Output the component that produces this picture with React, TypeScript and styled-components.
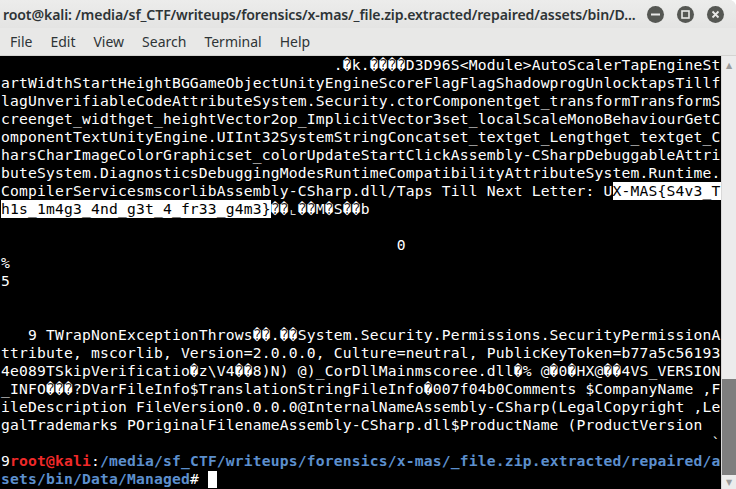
import * as React from "react";
import styled, { createGlobalStyle } from "styled-components";

const Global = createGlobalStyle`
  html, body {
    margin: 0;
    padding: 0;
    background: #ffffff;
  }
`;

const Window = styled.div`
  display: flex;
  flex-direction: column;
  width: 736px;
  height: 489px;
  overflow: hidden;
  border-top-right-radius: 7px;
  background: #e8e8e7;
`;

const TitleBar = styled.header`
  display: flex;
  align-items: center;
  height: 28px;
  padding: 0 0 0 3px;
  background: linear-gradient(#ececeb, #e4e4e3);
  font-family: "Noto Sans", sans-serif;
`;

const Title = styled.div`
  flex: 1;
  font-size: 14.1px;
  font-weight: 600;
  color: #2e3436;
  white-space: nowrap;
  letter-spacing: -0.12px;
`;

const Buttons = styled.div`
  display: flex;
  gap: 13px;
  padding-right: 12px;
`;

const WinButton = styled.div`
  width: 17px;
  height: 17px;
  border-radius: 50%;
  background: #555753;
  display: grid;
  place-items: center;
`;

const MenuBar = styled.nav`
  display: flex;
  align-items: center;
  height: 27px;
  padding-left: 1px;
  background: #e8e8e7;
  border-bottom: 1px solid #d4d4d2;
  font-family: "Noto Sans", sans-serif;
  font-size: 14px;
  color: #2e3436;
`;

const MenuItem = styled.span`
  padding: 0 9px;
`;

const Term = styled.div`
  flex: 1;
  display: flex;
  background: #000000;
`;

const Screen = styled.div`
  flex: 1;
  padding-left: 1px;
  font-family: "DejaVu Sans Mono", monospace;
  font-size: 14.67px;
  letter-spacing: 0.17px;
  color: #ffffff;
`;

const Line = styled.div`
  height: 18px;
  line-height: 18px;
  white-space: pre;
`;

const Sel = styled.span`
  display: inline-block;
  height: 18px;
  vertical-align: top;
  background: #ffffff;
  color: #000000;
`;

const Red = styled.span`
  color: #ef2929;
  font-weight: bold;
`;

const Blue = styled.span`
  color: #5c8fcd;
  font-weight: bold;
`;

const Cursor = styled.span`
  display: inline-block;
  width: 9px;
  height: 17px;
  vertical-align: -4px;
  background: #ffffff;
`;

const Scrollbar = styled.div`
  width: 14px;
  display: flex;
  flex-direction: column;
  background: #ececec;
  border-left: 1px solid #d8d8d8;
`;

const Arrow = styled.div<{ $down?: boolean }>`
  height: 14px;
  display: grid;
  place-items: center;
  color: #9a9a9a;
  font-size: 8px;
  font-family: "DejaVu Sans", sans-serif;
  margin-top: ${(p) => (p.$down ? "0" : "2px")};
`;

const Track = styled.div`
  flex: 1;
  display: flex;
  flex-direction: column;
  justify-content: flex-end;
`;

const Thumb = styled.div`
  height: 96px;
  background: #7e7e7e;
`;

const R = "\uFFFD";

const lines: React.ReactNode[] = [
  " ".repeat(37) + `.${R}k.${R}${R}${R}${R}D3D96S<Module>AutoScalerTapEngineSt`,
  "artWidthStartHeightBGGameObjectUnityEngineScoreFlagFlagShadowprogUnlocktapsTillf",
  "lagUnverifiableCodeAttributeSystem.Security.ctorComponentget_transformTransformS",
  "creenget_widthget_heightVector2op_ImplicitVector3set_localScaleMonoBehaviourGetC",
  "omponentTextUnityEngine.UIInt32SystemStringConcatset_textget_Lengthget_textget_C",
  "harsCharImageColorGraphicset_colorUpdateStartClickAssembly-CSharpDebuggableAttri",
  "buteSystem.DiagnosticsDebuggingModesRuntimeCompatibilityAttributeSystem.Runtime.",
  <>
    CompilerServicesmscorlibAssembly-CSharp.dll/Taps Till Next Letter: U
    <Sel>X-MAS{"{"}S4v3_T</Sel>
  </>,
  <>
    <Sel>h1s_1m4g3_4nd_g3t_4_fr33_g4m3{"}"}</Sel>
    {`${R}${R}\u231E${R}${R}M${R}S${R}${R}b`}
  </>,
  "",
  " ".repeat(44) + "0",
  "%",
  "5",
  "",
  "",
  `   9 TWrapNonExceptionThrows${R}${R}.${R}${R}System.Security.Permissions.SecurityPermissionA`,
  "ttribute, mscorlib, Version=2.0.0.0, Culture=neutral, PublicKeyToken=b77a5c56193",
  `4e089TSkipVerificatio${R}z\\V4${R}${R}8)N) @)_CorDllMainmscoree.dll${R}% @${R}0${R}HX@${R}${R}4VS_VERSION`,
  `_INFO${R}${R}${R}?DVarFileInfo$TranslationStringFileInfo${R}007f04b0Comments $CompanyName ,F`,
  "ileDescription FileVersion0.0.0.0@InternalNameAssembly-CSharp(LegalCopyright ,Le",
  "galTrademarks POriginalFilenameAssembly-CSharp.dll$ProductName (ProductVersion",
  " ".repeat(79) + "`",
  <>
    9<Red>root@kali</Red>:
    <Blue>/media/sf_CTF/writeups/forensics/x-mas/_file.zip.extracted/repaired/a</Blue>
  </>,
  <>
    <Blue>sets/bin/Data/Managed</Blue># <Cursor />
  </>,
];

const menu = ["File", "Edit", "View", "Search", "Terminal", "Help"];

export default function App() {
  return (
    <>
      <Global />
      <Window>
        <TitleBar>
          <Title>
            root@kali: /media/sf_CTF/writeups/forensics/x-mas/_file.zip.extracted/repaired/assets/bin/D...
          </Title>
          <Buttons>
            <WinButton>
              <svg width="9" height="9" viewBox="0 0 9 9">
                <rect x="0" y="3.5" width="9" height="2" fill="#e8e8e7" />
              </svg>
            </WinButton>
            <WinButton>
              <svg width="9" height="9" viewBox="0 0 9 9">
                <rect x="1" y="1" width="7" height="7" fill="none" stroke="#e8e8e7" strokeWidth="1.6" />
              </svg>
            </WinButton>
            <WinButton>
              <svg width="9" height="9" viewBox="0 0 9 9">
                <path d="M1.5 1.5 L7.5 7.5 M7.5 1.5 L1.5 7.5" stroke="#e8e8e7" strokeWidth="1.8" />
              </svg>
            </WinButton>
          </Buttons>
        </TitleBar>
        <MenuBar>
          {menu.map((m) => (
            <MenuItem key={m}>{m}</MenuItem>
          ))}
        </MenuBar>
        <Term>
          <Screen>
            {lines.map((l, i) => (
              <Line key={i}>{l}</Line>
            ))}
          </Screen>
          <Scrollbar>
            <Arrow>▲</Arrow>
            <Track>
              <Thumb />
            </Track>
            <Arrow $down>▼</Arrow>
          </Scrollbar>
        </Term>
      </Window>
    </>
  );
}
